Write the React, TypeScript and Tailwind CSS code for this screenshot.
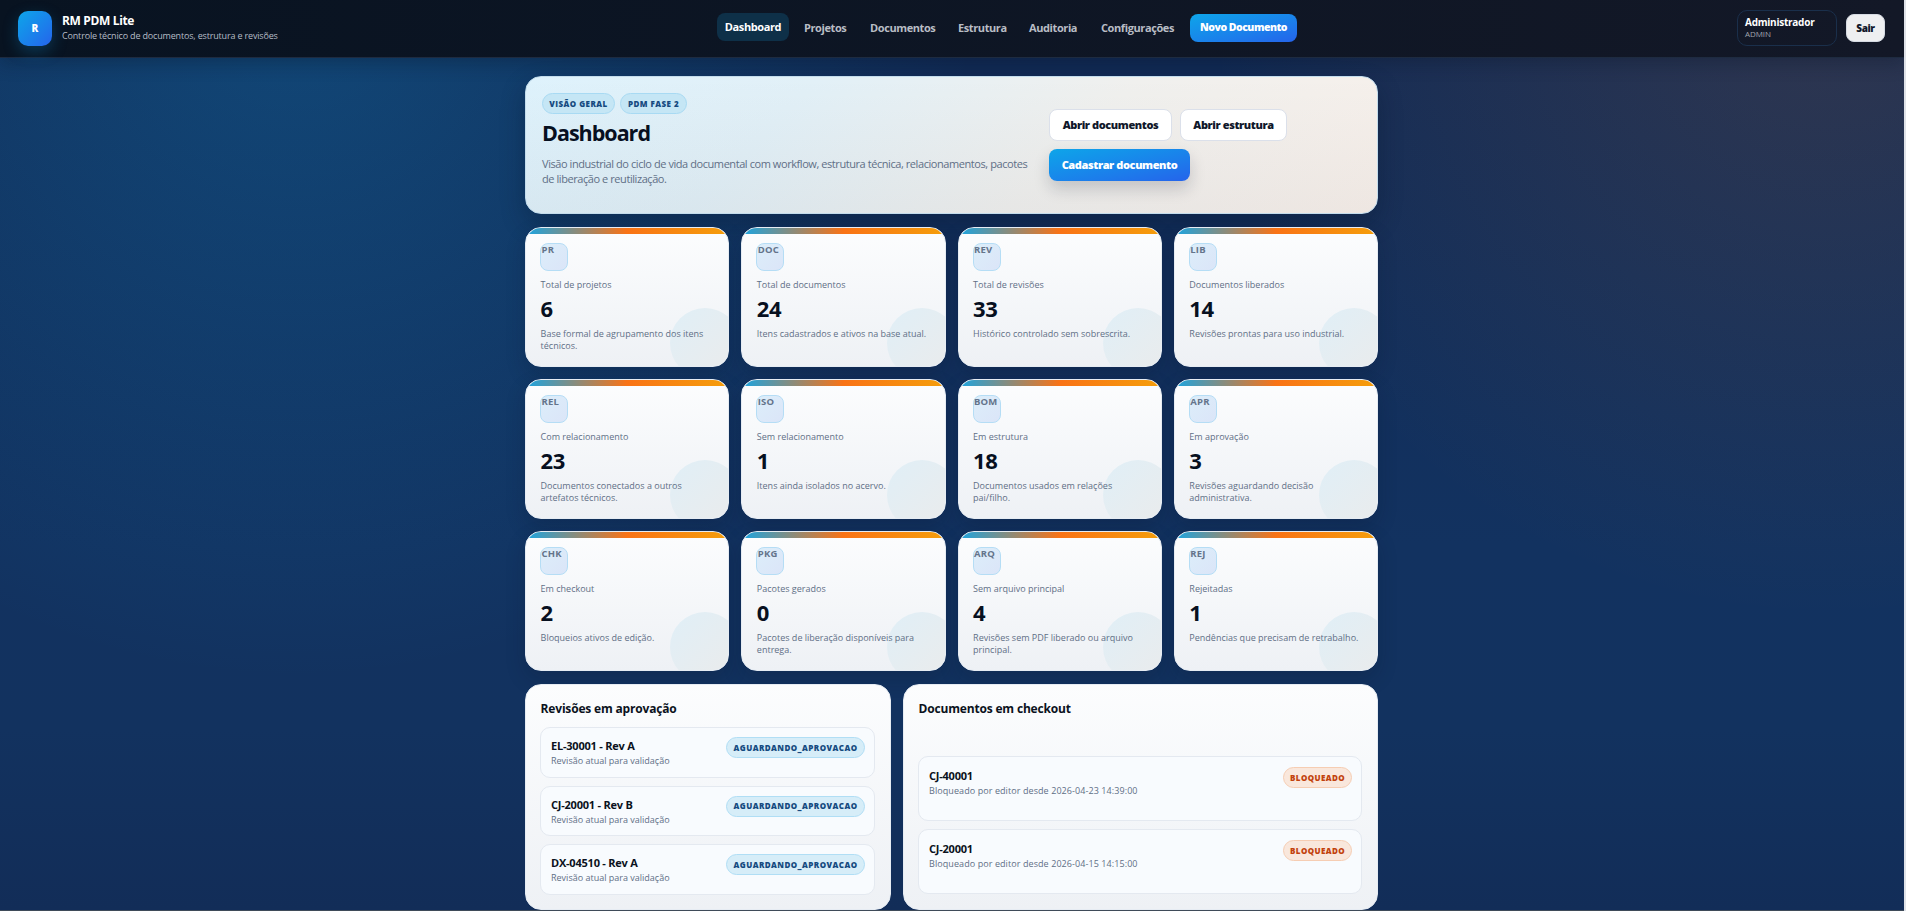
import React from "react";

interface Stat {
  code: string;
  label: string;
  value: number;
  text: string;
}

const stats: Stat[] = [
  { code: "PR", label: "Total de projetos", value: 6, text: "Base formal de agrupamento dos itens técnicos." },
  { code: "DOC", label: "Total de documentos", value: 24, text: "Itens cadastrados e ativos na base atual." },
  { code: "REV", label: "Total de revisões", value: 33, text: "Histórico controlado sem sobrescrita." },
  { code: "LIB", label: "Documentos liberados", value: 14, text: "Revisões prontas para uso industrial." },
  { code: "REL", label: "Com relacionamento", value: 23, text: "Documentos conectados a outros artefatos técnicos." },
  { code: "ISO", label: "Sem relacionamento", value: 1, text: "Itens ainda isolados no acervo." },
  { code: "BOM", label: "Em estrutura", value: 18, text: "Documentos usados em relações pai/filho." },
  { code: "APR", label: "Em aprovação", value: 3, text: "Revisões aguardando decisão administrativa." },
  { code: "CHK", label: "Em checkout", value: 2, text: "Bloqueios ativos de edição." },
  { code: "PKG", label: "Pacotes gerados", value: 0, text: "Pacotes de liberação disponíveis para entrega." },
  { code: "ARQ", label: "Sem arquivo principal", value: 4, text: "Revisões sem PDF liberado ou arquivo principal." },
  { code: "REJ", label: "Rejeitadas", value: 1, text: "Pendências que precisam de retrabalho." },
];

const approvals = ["EL-30001 - Rev A", "CJ-20001 - Rev B", "DX-04510 - Rev A"];

const checkouts = [
  { name: "CJ-40001", since: "2026-04-23 14:39:00" },
  { name: "CJ-20001", since: "2026-04-15 14:15:00" },
];

const Header: React.FC = () => {
  return (
    <header className="flex h-[58px] items-center border-b border-[#1e2b40] bg-linear-to-r from-[#081321] to-[#131827] pb-px shadow-[0_6px_16px_rgba(8,19,40,0.3)]">
      <div className="flex w-[717px] items-center pl-[18px]">
        <div className="flex h-[35px] w-[34px] items-center justify-center rounded-[10px] bg-linear-to-br from-[#0ea5e9] to-[#2563eb] text-[10px] font-extrabold text-white shadow-[0_6px_16px_rgba(14,165,233,0.25)]">
          R
        </div>
        <div className="ml-[10px]">
          <p className="text-[12px] leading-[16px] font-bold tracking-[-0.35px] text-white">RM PDM Lite</p>
          <p className="text-[9px] leading-[14px] tracking-[-0.17px] text-[#b5bcc6]">
            Controle técnico de documentos, estrutura e revisões
          </p>
        </div>
      </div>
      <nav className="flex shrink-0 items-center text-[11px] font-bold tracking-[-0.4px] whitespace-nowrap text-[#b9bdc5]">
        <a className="mb-[2px] flex h-7 w-[72px] items-center justify-center rounded-lg bg-[#0e3048] text-white">Dashboard</a>
        <a className="ml-[15px] w-[43px]">Projetos</a>
        <a className="ml-[23px] w-[65px]">Documentos</a>
        <a className="ml-[23px] w-[48px]">Estrutura</a>
        <a className="ml-[23px] w-[49px]">Auditoria</a>
        <a className="ml-[23px] w-[74px]">Configurações</a>
        <a className="ml-[15px] flex h-7 w-[107px] items-center justify-center rounded-lg bg-linear-to-br from-[#0ea5e9] to-[#2563eb] text-[10.5px] font-extrabold tracking-[-0.5px] text-white">
          Novo Documento
        </a>
      </nav>
      <div className="mr-[19px] ml-auto flex items-center">
        <div className="h-9 w-[100px] rounded-[10px] border border-[#1a2f4b] pt-[5px] pl-[7px]">
          <p className="text-[10px] leading-[13px] font-bold tracking-[-0.25px] text-white">Administrador</p>
          <p className="text-[8px] leading-[10px] tracking-[-0.1px] text-[#a0a5ae]">ADMIN</p>
        </div>
        <button className="ml-[9px] h-7 w-[39px] rounded-lg border border-[#d5dae2] bg-[#eeeff1] text-[10px] font-extrabold tracking-[-0.4px] text-[#0f172a]">
          Sair
        </button>
      </div>
    </header>
  );
};

const Hero: React.FC = () => {
  return (
    <section className="flex h-[138px] rounded-2xl border border-[#c3dcec] bg-[linear-gradient(180deg,rgba(15,23,42,0)_0%,rgba(15,23,42,0.045)_100%),linear-gradient(135deg,#def2fc_0%,#e2f0f7_30%,#f0f0ee_62%,#f8f0ea_100%)] pl-[16px] shadow-[0_10px_24px_rgba(8,19,40,0.3)]">
      <div className="w-[507px] pt-4">
        <div className="flex gap-[5px] text-[8px] font-extrabold tracking-[0.45px] text-[#154a80]">
          <span className="flex h-[21px] w-[73px] items-center justify-center rounded-full border border-[#a8daf3] bg-[#c5e6f5]">VISÃO GERAL</span>
          <span className="flex h-[21px] w-[67px] items-center justify-center rounded-full border border-[#a8daf3] bg-[#c5e6f5]">PDM FASE 2</span>
        </div>
        <h1 className="mt-[4px] text-[21.5px] leading-[30px] font-bold tracking-[-1px] text-[#07101f]">Dashboard</h1>
        <p className="mt-[8px] w-[490px] text-[11px] leading-[15px] tracking-[-0.43px] text-[#5f6f86]">
          Visão industrial do ciclo de vida documental com workflow, estrutura técnica, relacionamentos, pacotes
          de liberação e reutilização.
        </p>
      </div>
      <div className="flex w-[280px] flex-wrap content-start gap-2 pt-8 text-[11px] font-extrabold tracking-[-0.4px] text-[#0f172a]">
        <button className="h-8 w-[123px] rounded-lg border border-[#dbe0ea] bg-white">Abrir documentos</button>
        <button className="h-8 w-[107px] rounded-lg border border-[#dbe0ea] bg-white">Abrir estrutura</button>
        <button className="h-8 w-[141px] rounded-lg bg-linear-to-br from-[#0ea5e9] to-[#2563eb] text-white shadow-[0_8px_16px_rgba(15,23,42,0.18)]">
          Cadastrar documento
        </button>
      </div>
    </section>
  );
};

const StatCard: React.FC<{ stat: Stat }> = ({ stat }) => {
  return (
    <div className="rounded-2xl shadow-[0_8px_20px_rgba(8,19,40,0.2)]">
      <div className="relative h-[140px] overflow-hidden rounded-2xl border border-[#e6ecf3] bg-linear-to-b from-[#fcfdfe] to-[#eef1f5]">
        <div className="h-[6px] bg-[linear-gradient(90deg,#1ca4e0_0%,#f97316_50%,#f59e0b_100%)]"></div>
        <div className="absolute -right-[12px] -bottom-[12px] h-[70px] w-[70px] rounded-full bg-linear-to-br from-[#e0eff7] to-[#ebebeb]"></div>
        <div className="relative pt-[9px] pl-[14px]">
          <div className="h-7 w-7 rounded-lg border border-[#b5ddf5] bg-linear-to-br from-[#dceefa] to-[#dbe5f8] pl-[0.5px] text-[9.5px] leading-[12px] font-bold tracking-[0.2px] text-[#64748b]">
            {stat.code}
          </div>
          <div className="pl-[0.6px]">
            <p className="mt-[7px] text-[9px] leading-[14px] text-[#5f6f86]">{stat.label}</p>
            <p className="mt-[2px] text-[22px] leading-[28px] font-bold tracking-[-0.4px] text-[#07101f]">{stat.value}</p>
            <p className="mt-[6px] w-[174px] text-[9px] leading-[12px] text-[#5f6f86]">{stat.text}</p>
          </div>
        </div>
      </div>
    </div>
  );
};

export default function App() {
  return (
    <div className="h-[911px] w-full overflow-hidden border-r-2 border-[#dfe2e8] bg-[#3f4b59] font-['Open_Sans','Noto_Sans',sans-serif]">
      <div className="h-[910px] overflow-hidden bg-[radial-gradient(circle_680px_at_15.5%_0%,rgba(14,165,233,0.23),transparent),radial-gradient(circle_620px_at_96%_0%,rgba(240,130,40,0.13),transparent),linear-gradient(180deg,#122a54_0%,#123260_60%,#12325f_80%,#122d58_100%)]">
        <Header />
        <main className="mx-auto mt-[18px] w-[854px] pr-px">
          <Hero />
          <section className="mt-[13px] grid grid-cols-4 gap-3">
            {stats.map((s) => (
              <StatCard key={s.code} stat={s} />
            ))}
          </section>
          <section className="mt-[13px] flex gap-3">
            <div className="h-[226px] w-[366px] rounded-2xl border border-[#e6ecf3] bg-linear-to-b from-[#fcfdfe] to-[#eef1f5] pr-[15px] pl-[14px]">
              <h2 className="mt-[15px] pl-[0.6px] text-[12px] leading-[18px] font-bold tracking-[-0.18px] text-[#0b1220]">Revisões em aprovação</h2>
              <div className="mt-[9px] flex flex-col gap-2">
                {approvals.map((name) => (
                  <div key={name} className="flex h-[50.5px] justify-between rounded-[10px] border border-[#e4e9f0] bg-[#f8fbfe] px-[10px] pt-[9px]">
                    <div>
                      <p className="mt-px text-[11px] leading-[15px] font-bold tracking-[-0.22px] text-[#0b1220]">{name}</p>
                      <p className="mt-px text-[9px] leading-[14px] text-[#5f6f86]">Revisão atual para validação</p>
                    </div>
                    <span className="-mr-px flex h-[21px] w-[139px] items-center justify-center rounded-full border border-[#b0def5] bg-[#d6edf8] text-[8px] font-extrabold tracking-[0.45px] text-[#154a80]">
                      AGUARDANDO_APROVACAO
                    </span>
                  </div>
                ))}
              </div>
            </div>
            <div className="h-[226px] w-[475px] rounded-2xl border border-[#e6ecf3] bg-linear-to-b from-[#fcfdfe] to-[#eef1f5] pr-[15px] pl-[14px]">
              <h2 className="mt-[15px] pl-[0.6px] text-[12px] leading-[18px] font-bold tracking-[-0.18px] text-[#0b1220]">Documentos em checkout</h2>
              <div className="mt-[38px] flex flex-col gap-2">
                {checkouts.map((c) => (
                  <div key={c.name} className="flex h-[65px] justify-between rounded-[10px] border border-[#e4e9f0] bg-[#f8fbfe] px-[10px] pt-[10px]">
                    <div>
                      <p className="mt-px text-[11px] leading-[15px] font-bold tracking-[-0.22px] text-[#0b1220]">{c.name}</p>
                      <p className="mt-px text-[9px] leading-[14px] tracking-[0.08px] text-[#5f6f86]">Bloqueado por editor desde {c.since}</p>
                    </div>
                    <span className="-mr-px flex h-[21px] w-[69px] items-center justify-center rounded-full border border-[#f6cdb3] bg-[#f9e7dc] text-[8px] font-extrabold tracking-[0.4px] text-[#c2410c]">
                      BLOQUEADO
                    </span>
                  </div>
                ))}
              </div>
            </div>
          </section>
        </main>
      </div>
    </div>
  );
}
